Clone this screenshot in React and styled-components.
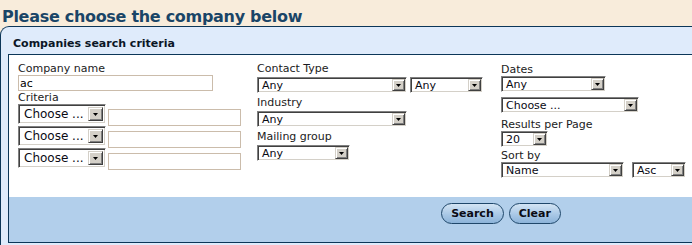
import React from "react";
import styled, { createGlobalStyle } from "styled-components";

const GlobalStyle = createGlobalStyle`
  html, body {
    margin: 0;
    padding: 0;
  }
  body {
    background: #f8ecdb;
    font-family: "DejaVu Sans", Verdana, sans-serif;
  }
`;

const Page = styled.div`
  width: 692px;
  height: 245px;
  padding-top: 8px;
  box-sizing: border-box;
  overflow: hidden;
`;

const Title = styled.h2`
  margin: 0 0 0 2px;
  font-size: 16px;
  line-height: 18px;
  font-weight: bold;
  letter-spacing: -0.3px;
  color: #1a4567;
  white-space: nowrap;
`;

const Panel = styled.div`
  width: 1001px;
  padding: 10px 7px 2px 7px;
  background: #dfebfb;
  border-top: 1px solid #0c3658;
  border-left: 1px solid #0c3658;
  border-top-left-radius: 9px;
`;

const PanelHeader = styled.div`
  margin: 0 0 4px 5px;
  font-size: 11px;
  line-height: 13px;
  font-weight: bold;
  color: #0b1626;
`;

const SearchBox = styled.div`
  width: 986px;
  box-sizing: border-box;
  border: 1px solid #0c3658;
  background: #fff;
`;

const Criteria = styled.div`
  display: grid;
  grid-template-columns: 239px 244px 1fr;
  height: 142px;
  padding: 0 9px;
  box-sizing: border-box;
`;

const Column = styled.div`
  display: flex;
  flex-direction: column;
  align-items: flex-start;
  padding-top: ${(p) => p.$pt}px;
`;

const Label = styled.label`
  display: block;
  margin-top: ${(p) => p.$mt || 0}px;
  font-size: 11px;
  line-height: ${(p) => p.$lh || 13}px;
  color: #1b1b22;
  white-space: nowrap;
`;

const TextInput = styled.input`
  box-sizing: border-box;
  width: ${(p) => p.$w}px;
  height: ${(p) => p.$h}px;
  margin: ${(p) => p.$m || 0};
  padding: 0 1px;
  border: 1px solid #cbbcab;
  background: #fff;
  font-family: inherit;
  font-size: 11px;
  color: #000;
  outline: none;
`;

const CriteriaRow = styled.div`
  display: flex;
  align-items: flex-start;
  height: 22px;
`;

const SelectRow = styled.div`
  display: flex;
  align-items: flex-start;
  gap: ${(p) => p.$gap}px;
  margin-top: ${(p) => p.$mt || 0}px;
`;

const SelectFrame = styled.div`
  display: inline-flex;
  align-items: center;
  box-sizing: border-box;
  width: ${(p) => p.$w}px;
  height: ${(p) => (p.$big ? 20 : 16)}px;
  margin-top: ${(p) => p.$mt || 0}px;
  padding: 1px;
  background: #fff;
  border: 1px solid;
  border-color: #808080 #ffffff #ffffff #808080;
  box-shadow: inset 1px 1px 0 #404040, inset -1px -1px 0 #d4d0c8;
  font-size: ${(p) => (p.$big ? 12 : 11)}px;
  color: #0a0a14;
`;

const SelectValue = styled.span`
  flex: 1;
  overflow: hidden;
  white-space: nowrap;
  padding-left: ${(p) => (p.$big ? 4 : 3)}px;
  line-height: 1;
`;

const ArrowButton = styled.span`
  display: flex;
  align-items: center;
  justify-content: center;
  box-sizing: border-box;
  width: ${(p) => (p.$big ? 15 : 13)}px;
  height: ${(p) => (p.$big ? 14 : 12)}px;
  margin-right: ${(p) => (p.$big ? 1 : 0)}px;
  background: #d4d0c8;
  border: 1px solid;
  border-color: #d4d0c8 #404040 #404040 #d4d0c8;
  box-shadow: inset 1px 1px 0 #ffffff, inset -1px -1px 0 #808080;
`;

const Footer = styled.div`
  display: flex;
  justify-content: center;
  gap: 5px;
  height: 45px;
  padding-top: 6px;
  box-sizing: border-box;
  background: #b2cfeb;
`;

const PillButton = styled.button`
  height: 21px;
  padding: 0 9px;
  border: 1px solid #1f476a;
  border-radius: 11px;
  background: linear-gradient(#d3e4f4, #a9c8e6 55%, #8cb3d9);
  font-family: inherit;
  font-size: 11px;
  font-weight: bold;
  color: #0b0b14;
  cursor: pointer;
`;

const Select = ({ value, width, big, mt }) => (
  <SelectFrame $w={width} $big={big} $mt={mt}>
    <SelectValue $big={big}>{value}</SelectValue>
    <ArrowButton $big={big}>
      <svg width="5" height="3" viewBox="0 0 5 3">
        <polygon points="0,0 5,0 2.5,3" fill="#000" />
      </svg>
    </ArrowButton>
  </SelectFrame>
);

export default function App() {
  return (
    <>
      <GlobalStyle />
      <Page>
        <Title>Please choose the company below</Title>
        <Panel>
          <PanelHeader>Companies search criteria</PanelHeader>
          <SearchBox>
            <Criteria>
              <Column $pt={7}>
                <Label>Company name</Label>
                <TextInput $w={195} $h={16} defaultValue="ac" />
                <Label>Criteria</Label>
                {[0, 1, 2].map((i) => (
                  <CriteriaRow key={i}>
                    <Select value="Choose ..." width={88} big />
                    <TextInput $w={133} $h={17} $m="5px 0 0 2px" />
                  </CriteriaRow>
                ))}
              </Column>

              <Column $pt={7}>
                <Label>Contact Type</Label>
                <SelectRow $gap={3} $mt={2}>
                  <Select value="Any" width={150} />
                  <Select value="Any" width={73} />
                </SelectRow>
                <Label $mt={3}>Industry</Label>
                <Select value="Any" width={150} mt={2} />
                <Label $mt={3}>Mailing group</Label>
                <Select value="Any" width={93} mt={2} />
              </Column>

              <Column $pt={9}>
                <Label $lh={12}>Dates</Label>
                <Select value="Any" width={105} />
                <Select value="Choose ..." width={138} mt={5} />
                <Label $lh={12} $mt={6}>Results per Page</Label>
                <Select value="20" width={47} />
                <Label $lh={12} $mt={3}>Sort by</Label>
                <SelectRow $gap={8}>
                  <Select value="Name" width={123} />
                  <Select value="Asc" width={54} />
                </SelectRow>
              </Column>
            </Criteria>
            <Footer>
              <PillButton type="button">Search</PillButton>
              <PillButton type="button">Clear</PillButton>
            </Footer>
          </SearchBox>
        </Panel>
      </Page>
    </>
  );
}
